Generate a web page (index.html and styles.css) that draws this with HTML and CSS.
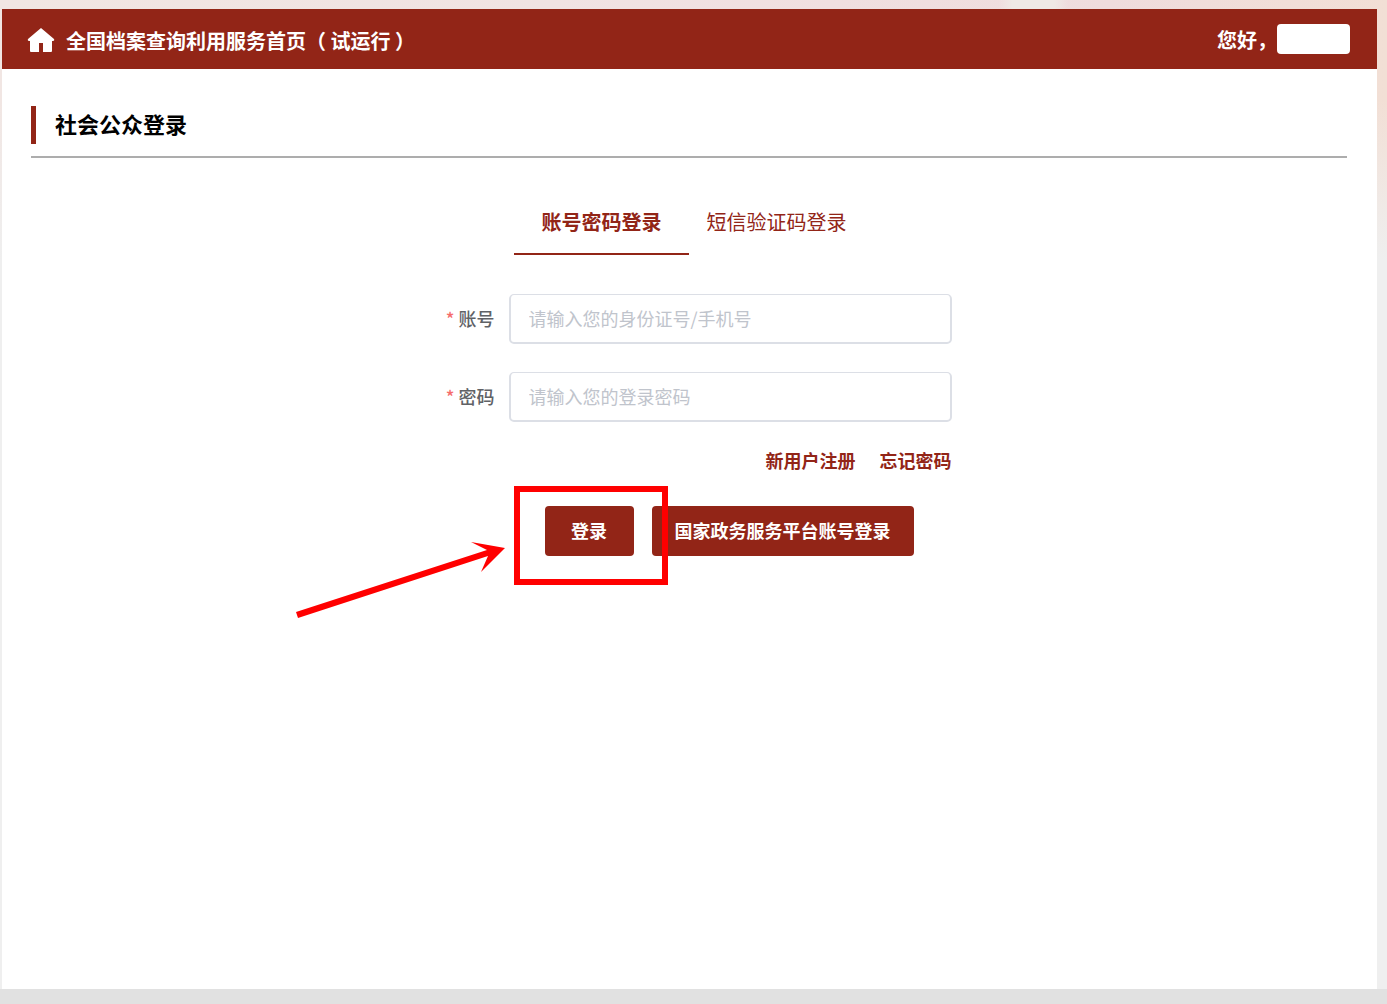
FILE: index.html
```html
<!DOCTYPE html>
<html lang="zh-CN">
<head>
    <meta charset="UTF-8">
    <meta name="viewport" content="width=device-width, initial-scale=1.0">
    <title>社会公众登录</title>
    <link rel="stylesheet" href="styles.css">
</head>
<body>
    <div class="page">
        <header class="header">
            <a class="home-link" href="#">
                <svg class="home-icon" width="28" height="24" viewBox="0 0 28 24" aria-hidden="true">
                    <path fill="#fff" d="M14 0 L27 11 Q28 13 25 13 V23 Q25 24 24 24 H16 V15 H12 V24 H4 Q3 24 3 23 V13 Q0 13 1 11 Z"/>
                </svg>
                <span>全国档案查询利用服务首页（ 试运行 ）</span>
            </a>
            <div class="user">
                <span>您好，</span>
                <span class="user-name"></span>
            </div>
        </header>

        <main class="content">
            <div class="title-bar">
                <h1>社会公众登录</h1>
            </div>

            <div class="tabs" role="tablist">
                <button class="tab active" type="button" role="tab" aria-selected="true">账号密码登录</button>
                <button class="tab" type="button" role="tab" aria-selected="false">短信验证码登录</button>
            </div>

            <form class="login-form">
                <div class="form-item">
                    <label for="account">账号</label>
                    <input id="account" type="text" placeholder="请输入您的身份证号/手机号">
                </div>
                <div class="form-item">
                    <label for="password">密码</label>
                    <input id="password" type="password" placeholder="请输入您的登录密码">
                </div>
                <div class="links">
                    <a href="#">新用户注册</a>
                    <a href="#">忘记密码</a>
                </div>
                <div class="actions">
                    <div class="login-wrap">
                        <button class="btn" type="submit">登录</button>
                        <div class="mark-box"></div>
                        <svg class="mark-arrow" width="210" height="80" viewBox="0 0 210 80" aria-hidden="true">
                            <path fill="#f00" d="M1 72 L192 10 L176 2 L210 8 L186 32 L193 16 L3 78 Z"/>
                        </svg>
                    </div>
                    <button class="btn" type="button">国家政务服务平台账号登录</button>
                </div>
            </form>
        </main>
    </div>
    <footer class="footer"></footer>
</body>
</html>
```
FILE: styles.css
```css
* {
    box-sizing: border-box;
}

body {
    margin: 0;
    min-height: 100vh;
    display: flex;
    flex-direction: column;
    font-family: "Noto Sans CJK SC", "Microsoft YaHei", sans-serif;
    font-size: 18px;
    background: linear-gradient(to bottom, transparent 100px, #efefef 260px),
        linear-gradient(to right, transparent 72%, #efe9e5 73%, #efe9e5 76%, transparent 77%),
        linear-gradient(to right, #f1e6e3, #f0e3e3 40%, #f0dfe0 60%, #efdcdd 80%, #f2dfd5);
}

.page {
    flex: 1;
    margin: 9px 10px 0 2px;
    background: #fff;
}

/* header */
.header {
    display: flex;
    align-items: center;
    justify-content: space-between;
    height: 60px;
    padding: 0 27px 0 25px;
    background: #922517;
    color: #fff;
    font-size: 20px;
    font-weight: bold;
}

.home-link {
    display: flex;
    align-items: center;
    gap: 11px;
    padding-top: 2px;
    color: #fff;
    text-decoration: none;
}

.user {
    display: flex;
    align-items: center;
}

.user-name {
    width: 73px;
    height: 30px;
    border-radius: 4px;
    background: #fff;
}

/* title */
.content {
    padding: 37px 30px 0 29px;
}

.title-bar {
    padding-bottom: 12px;
    border-bottom: 2px solid #adadad;
}

.title-bar h1 {
    margin: 0;
    padding: 0 0 4px 19px;
    border-left: 5px solid #922517;
    font-size: 22px;
    line-height: 34px;
    color: #000;
}

/* tabs */
.tabs {
    display: flex;
    justify-content: center;
    margin-top: 32px;
}

.tab {
    width: 175px;
    height: 65px;
    padding: 0;
    border: none;
    border-bottom: 2px solid transparent;
    background: none;
    color: #922517;
    font-family: inherit;
    font-size: 20px;
    cursor: pointer;
}

.tab.active {
    border-bottom-color: #922517;
    font-weight: bold;
}

/* form */
.login-form {
    width: 525px;
    max-width: 100%;
    margin: 39px auto 0;
}

.form-item {
    display: flex;
    align-items: center;
    margin-bottom: 28px;
}

.form-item label {
    width: 82px;
    padding: 0 14px 2px 0;
    text-align: right;
    font-weight: 500;
    color: #606266;
}

.form-item label::before {
    content: "*";
    margin-right: 4px;
    color: #f56c6c;
}

.form-item input {
    flex: 1;
    min-width: 0;
    height: 50px;
    padding: 0 18px 2px;
    border: 2px solid #dcdfe6;
    border-top-width: 1px;
    border-radius: 5px;
    font-family: inherit;
    font-size: 18px;
    color: #606266;
}

.form-item input::placeholder {
    color: #c0c4cc;
}

.links {
    display: flex;
    justify-content: flex-end;
    gap: 24px;
    line-height: 20px;
}

.links a {
    color: #922517;
    font-weight: bold;
    text-decoration: none;
}

.actions {
    display: flex;
    justify-content: center;
    gap: 18px;
    margin-top: 36px;
    padding-left: 80px;
}

.btn {
    min-width: 89px;
    height: 50px;
    padding: 0 23px 3px;
    border: none;
    border-radius: 4px;
    background: #922517;
    color: #fff;
    font-family: inherit;
    font-size: 18px;
    font-weight: bold;
    cursor: pointer;
}

/* red marks over the login button */
.login-wrap {
    position: relative;
}

.mark-box {
    position: absolute;
    left: -31px;
    top: -20px;
    width: 154px;
    height: 99px;
    border: 6px solid #f00;
    pointer-events: none;
    z-index: 1;
}

.mark-arrow {
    position: absolute;
    left: -250px;
    top: 34px;
    pointer-events: none;
}

.footer {
    height: 15px;
    background: #e1e1e1;
}
```
